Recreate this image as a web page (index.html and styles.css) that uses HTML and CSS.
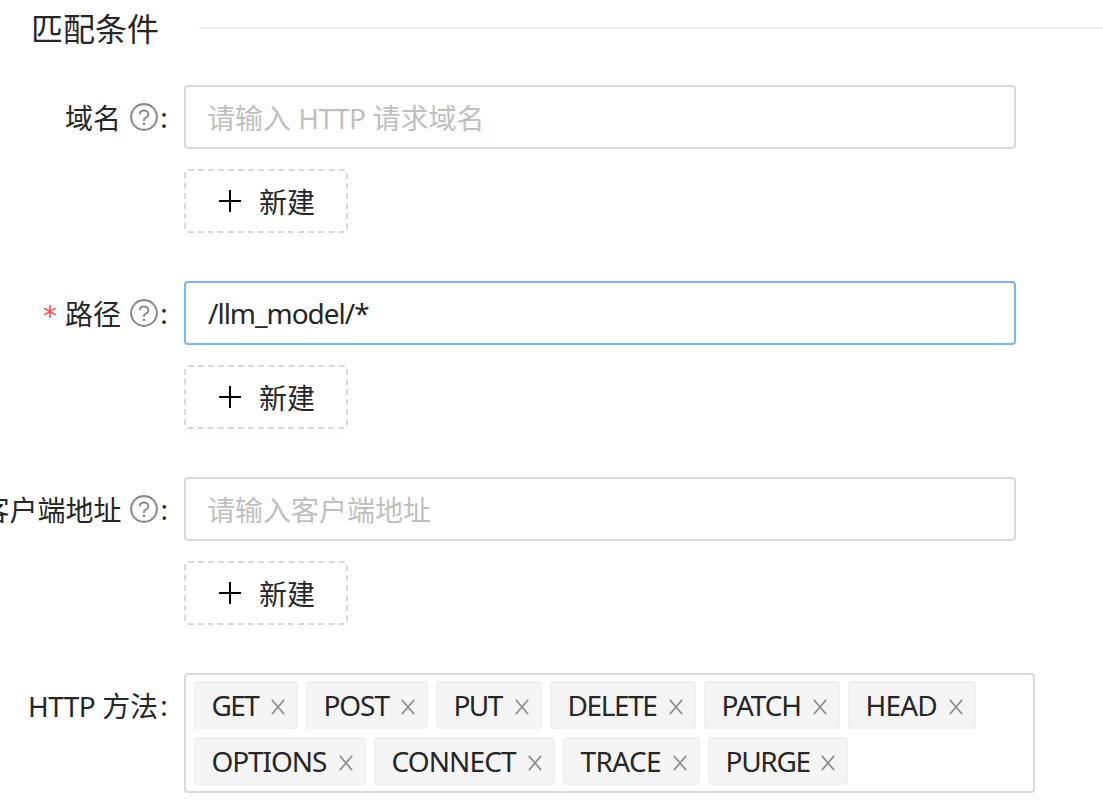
FILE: index.html
```html
<!DOCTYPE html>
<html lang="zh-CN">
<head>
<meta charset="utf-8">
<title>匹配条件</title>
<link rel="stylesheet" href="styles.css">
</head>
<body>
<svg class="defs" aria-hidden="true">
  <symbol id="help" viewBox="0 0 28 28"><circle cx="14" cy="14" r="12.9" stroke-width="2.1"/><path d="M9.7 11.3C9.7 8.9 11.5 7.5 14 7.5s4.3 1.6 4.3 3.8c0 1.9-1.2 3-2.7 3.6-1.1.5-1.6 1.1-1.6 2.2v.8" stroke-width="1.9"/><circle cx="14" cy="20.9" r="1.3" fill="currentColor" stroke="none"/></symbol>
  <symbol id="plus" viewBox="0 0 22 22"><path d="M11 0v22M0 11h22" stroke-width="2"/></symbol>
  <symbol id="close" viewBox="0 0 14 16"><path d="M.8.8l12.4 14.4M13.2.8L.8 15.2" stroke-width="1.7"/></symbol>
</svg>
<form class="form">
  <h2 class="divider"><span>匹配条件</span></h2>

  <div class="item">
    <label class="label"><span class="name">域名</span><svg class="help"><use href="#help"/></svg><i class="colon">:</i></label>
    <div class="control">
      <div class="input placeholder">请输入 <span class="http">HTTP</span> 请求域名</div>
      <button class="add" type="button"><svg><use href="#plus"/></svg><span>新建</span></button>
    </div>
  </div>

  <div class="item">
    <label class="label"><b class="required">*</b><span class="name">路径</span><svg class="help"><use href="#help"/></svg><i class="colon">:</i></label>
    <div class="control">
      <div class="input focused"><span class="path">/llm_model/*</span></div>
      <button class="add" type="button"><svg><use href="#plus"/></svg><span>新建</span></button>
    </div>
  </div>

  <div class="item">
    <label class="label"><span class="name">客户端地址</span><svg class="help"><use href="#help"/></svg><i class="colon">:</i></label>
    <div class="control">
      <div class="input placeholder">请输入客户端地址</div>
      <button class="add" type="button"><svg><use href="#plus"/></svg><span>新建</span></button>
    </div>
  </div>

  <div class="item">
    <label class="label"><span class="method"><span class="http">HTTP</span> 方法</span><i class="colon">:</i></label>
    <div class="select">
      <div class="tag get"><span>GET</span><svg><use href="#close"/></svg></div>
      <div class="tag post"><span>POST</span><svg><use href="#close"/></svg></div>
      <div class="tag put"><span>PUT</span><svg><use href="#close"/></svg></div>
      <div class="tag delete"><span>DELETE</span><svg><use href="#close"/></svg></div>
      <div class="tag patch"><span>PATCH</span><svg><use href="#close"/></svg></div>
      <div class="tag head"><span>HEAD</span><svg><use href="#close"/></svg></div>
      <div class="tag options"><span>OPTIONS</span><svg><use href="#close"/></svg></div>
      <div class="tag connect"><span>CONNECT</span><svg><use href="#close"/></svg></div>
      <div class="tag trace"><span>TRACE</span><svg><use href="#close"/></svg></div>
      <div class="tag purge"><span>PURGE</span><svg><use href="#close"/></svg></div>
    </div>
  </div>
</form>
</body>
</html>
```
FILE: styles.css
```css
* { box-sizing: border-box; }
body {
  margin: 0;
  background: #fff;
  color: #262626;
  font: 28px/44px "Noto Sans", "Noto Sans CJK SC", sans-serif;
  overflow: hidden;
}
svg { fill: none; stroke: currentColor; flex: none; }
.defs { display: none; }
.form { width: 1103px; height: 811px; }
.divider {
  display: flex;
  align-items: center;
  gap: 40px;
  height: 56px;
  margin: 0 0 29px;
  padding-left: 31px;
  font-size: 32px;
  font-weight: 400;
}
.divider span { padding-top: 2px; }
.divider::after { content: ""; flex: 1; height: 2px; background: #f0f0f0; }
.item { display: flex; margin-bottom: 48px; }
.label {
  display: flex;
  flex: none;
  align-items: center;
  justify-content: flex-end;
  width: 184px;
  height: 64px;
  padding-right: 15px;
  white-space: nowrap;
}
.name { padding: 2px 1px 0 0; }
.method { padding-top: 1px; letter-spacing: -.1px; }
.help { width: 28px; height: 28px; margin-left: 8px; color: #8c8c8c; }
.colon { width: 8px; margin-left: 2px; margin-right: 1px; font-style: normal; text-align: center; }
.required {
  margin-right: 8px;
  padding-top: 7px;
  color: #ff4d4f;
  font-family: "DejaVu Sans", sans-serif;
  font-weight: 400;
}
.control { display: flex; flex-direction: column; align-items: flex-start; gap: 20px; }
.input {
  width: 832px;
  height: 64px;
  padding: 9px 21px;
  border: 2px solid #d9d9d9;
  border-radius: 4px;
  white-space: nowrap;
}
.placeholder { color: #bfbfbf; }
.focused { padding: 8px 22px; border-color: #7db5f2; }
.http { letter-spacing: -.6px; }
.path { letter-spacing: -1px; }
.add {
  display: flex;
  align-items: center;
  gap: 18px;
  width: 164px;
  height: 64px;
  padding: 0 0 0 33px;
  border: 2px dashed #d9d9d9;
  border-radius: 4px;
  background: #fff;
  box-shadow: 0 4px 0 rgba(0, 0, 0, .015);
  color: #262626;
  font: inherit;
}
.add svg { width: 22px; height: 22px; color: #000; }
.add span { padding-top: 2px; }
.select {
  display: flex;
  flex-wrap: wrap;
  gap: 8px;
  align-content: flex-start;
  width: 851px;
  height: 120px;
  padding: 6px 50px 6px 8px;
  border: 2px solid #d9d9d9;
  border-radius: 4px;
}
.tag {
  display: flex;
  align-items: center;
  justify-content: space-between;
  height: 48px;
  padding: 0 11px 0 15.5px;
  border: 2px solid #f0f0f0;
  border-radius: 4px;
  background: #f5f5f5;
}
.tag svg { width: 14px; height: 16px; margin-top: 4px; color: #8c8c8c; }
.get { width: 104px; letter-spacing: -1.6px; }
.post { width: 122px; letter-spacing: -1.1px; }
.put { width: 106px; letter-spacing: -1.6px; }
.delete { width: 146px; letter-spacing: -1.4px; }
.patch { width: 136px; letter-spacing: -1.1px; }
.head { width: 128px; letter-spacing: -.8px; }
.options { width: 172px; letter-spacing: -1.1px; }
.connect { width: 181px; letter-spacing: -.9px; }
.trace { width: 137px; letter-spacing: -.6px; }
.purge { width: 140px; letter-spacing: -1.3px; }
```
